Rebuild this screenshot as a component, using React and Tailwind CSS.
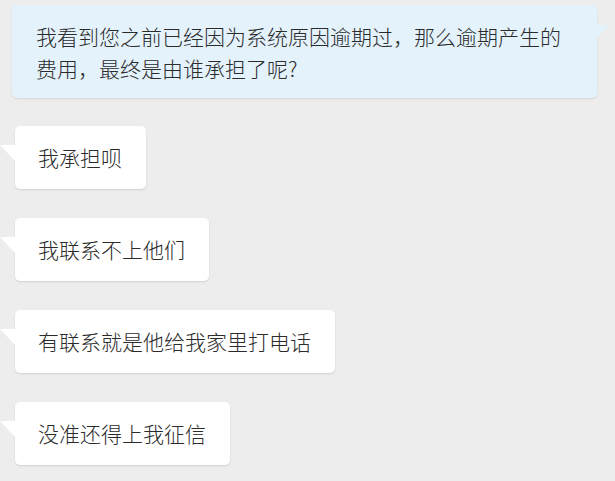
import React from "react";

const replies = [
  "我承担呗",
  "我联系不上他们",
  "有联系就是他给我家里打电话",
  "没准还得上我征信",
];

const font = { fontFamily: '"Noto Sans CJK SC", "Noto Sans", sans-serif' };

const LeftBubble = ({ text }) => (
  <div className="relative ml-[15px] rounded-[5px] bg-white pl-[23px] pr-[24px] py-[16px] text-[21px] leading-[31px] font-light text-[#2b2b2b] shadow-[0_1px_2px_rgba(0,0,0,0.12)]">
    <svg
      width="16"
      height="17"
      className="absolute -left-[15px] top-[19px]"
      viewBox="0 0 16 17"
    >
      <polygon points="0,0 16,0 16,17" fill="#ffffff" />
    </svg>
    {text}
  </div>
);

export default function App() {
  return (
    <div
      className="min-h-[481px] w-[615px] overflow-hidden bg-[#ededed] pt-[5px]"
      style={font}
    >
      <div className="relative ml-[12px] mr-[18px] rounded-[5px] bg-[#e4f2fc] pl-[24px] pr-[20px] pt-[15px] pb-[14px] text-[21px] leading-[32px] font-light text-[#2b2b2b] shadow-[0_1px_2px_rgba(0,0,0,0.1)]">
        <svg
          width="14"
          height="14"
          className="absolute -right-[13px] top-[20px]"
          viewBox="0 0 14 14"
        >
          <polygon points="0,0 14,0 0,14" fill="#e4f2fc" />
        </svg>
        我看到您之前已经因为系统原因逾期过，那么逾期产生的
        <br />
        费用，最终是由谁承担了呢?
      </div>

      <div className="mt-[28px] flex flex-col items-start gap-[29px]">
        {replies.map((r) => (
          <LeftBubble key={r} text={r} />
        ))}
      </div>
    </div>
  );
}
